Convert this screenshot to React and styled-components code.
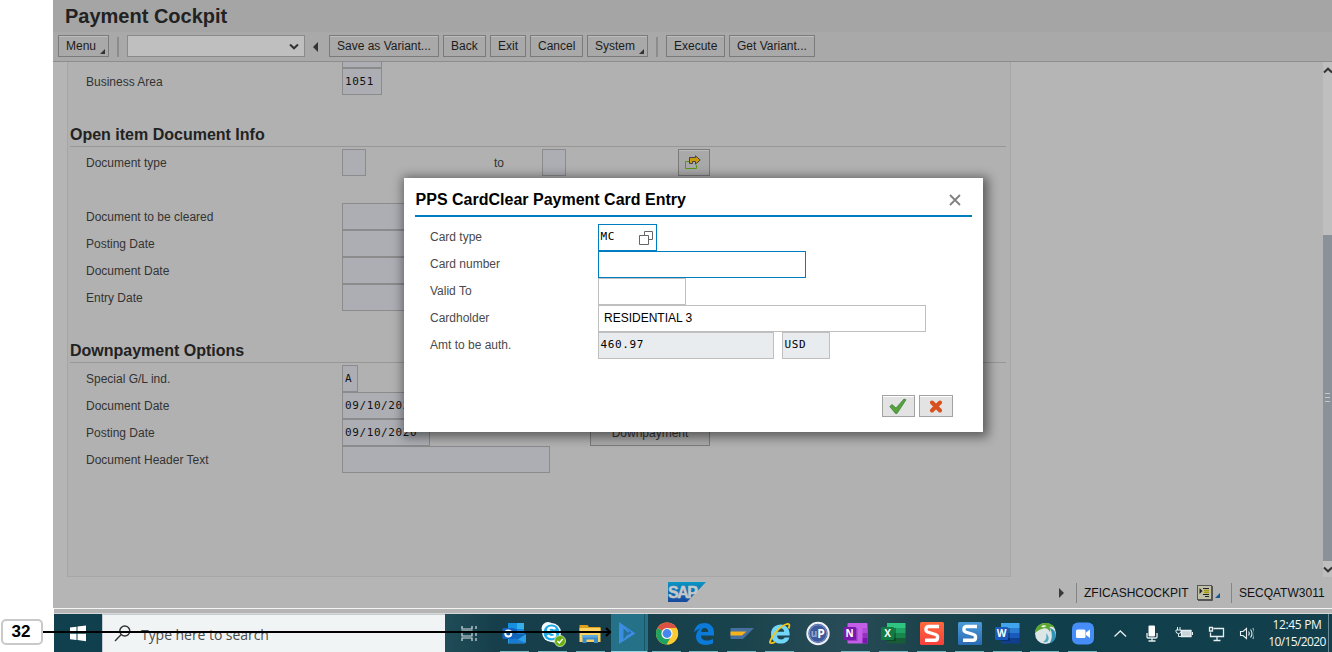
import React from 'react';
import styled, { createGlobalStyle } from 'styled-components';

const sans = '"Liberation Sans", Arial, sans-serif';
const mono = '"DejaVu Sans Mono", "Lucida Console", monospace';
const segoe = '"Open Sans", "Segoe UI", sans-serif';

const GlobalStyle = createGlobalStyle`
  * { box-sizing: border-box; }
  body { margin: 0; background: #fff; font-family: ${sans}; font-size: 12px; }
  svg { display: block; flex: none; }
`;

const Screen = styled.div`
  position: relative;
  width: 1332px;
  height: 652px;
  padding-left: 53px;
  overflow: hidden;
  display: flex;
  flex-direction: column;
`;
const Window = styled.div`
  height: 608px;
  display: flex;
  flex-direction: column;
  background: #b5b5b5;
`;
const TitleBar = styled.h1`
  margin: 0;
  height: 32px;
  padding-left: 12px;
  background: #a5a5a5;
  color: #222;
  font-size: 20px;
  line-height: 32px;
  font-weight: bold;
`;
const Toolbar = styled.div`
  height: 30px;
  display: flex;
  align-items: flex-start;
  gap: 4px;
  padding: 3px 0 0 5px;
  background: #a9a9a9;
  border-bottom: 1px solid #8d8d8d;
`;
const ToolButton = styled.div`
  position: relative;
  width: ${(p) => p.$w}px;
  height: 22px;
  padding-left: 7px;
  border: 1px solid #7b7b7b;
  box-shadow: inset 0 1px 0 #bdbdbd;
  background: #a9a9a9;
  color: #1c1c1c;
  line-height: 20px;
  white-space: nowrap;
`;
const Corner = styled.span`
  position: absolute;
  right: 3px;
  bottom: 2px;
  border-left: 5px solid transparent;
  border-bottom: 5px solid #333;
`;
const Separator = styled.div`
  width: 2px;
  height: 20px;
  margin: 2px 4px 0;
  background: #8c8c8c;
`;
const Combo = styled.div`
  width: 178px;
  height: 22px;
  display: flex;
  align-items: center;
  justify-content: flex-end;
  padding-right: 5px;
  border: 1px solid #8a8a8a;
  background: #bfbfbf;
`;
const CollapseArrow = styled.div`
  margin: 7px 7px 0 4px;
  border: 5px solid transparent;
  border-right-color: #333;
  border-left: 0;
`;
const Body = styled.div`
  height: 515px;
  display: flex;
  justify-content: space-between;
  padding-left: 14px;
`;
const Panel = styled.div`
  width: 944px;
  overflow: hidden;
  background: #b1b1b1;
  border: 1px solid #a6a6a6;
  border-top: 0;
  padding: 0 4px 0 2px;
`;
const Row = styled.div`
  height: ${(p) => p.$h || 27}px;
  padding-left: 16px;
  display: flex;
  align-items: flex-end;
`;
const Label = styled.div`
  width: ${(p) => p.$w || 256}px;
  height: 27px;
  flex: none;
  line-height: 29px;
  color: #333;
  white-space: nowrap;
`;
const Field = styled.div`
  width: ${(p) => p.$w}px;
  height: 27px;
  flex: none;
  padding-left: 2px;
  border: 1px solid #8b8b8b;
  background: #adaeb4;
  color: #111;
  font: 11px/25px ${mono};
  letter-spacing: 0.6px;
  white-space: nowrap;
`;
const SectionTitle = styled.h2`
  margin: 0 0 2px;
  height: 25px;
  border-bottom: 1px solid #979797;
  color: #222;
  font-size: 16px;
  line-height: 25px;
  font-weight: bold;
`;
const MoreButton = styled.div`
  width: 32px;
  height: 27px;
  margin-left: 112px;
  padding-right: 2px;
  display: flex;
  align-items: center;
  justify-content: center;
  border: 1px solid #7b7b7b;
  box-shadow: inset 0 1px 0 #bdbdbd;
  background: #a9a9a9;
`;
const DownButton = styled.div`
  width: 120px;
  height: 27px;
  margin-left: 160px;
  border: 1px solid #7b7b7b;
  background: #a9a9a9;
  color: #333;
  text-align: center;
  line-height: 27px;
`;
const Scrollbar = styled.div`
  width: 9px;
  display: flex;
  flex-direction: column;
  background: #bfbfbf;
  overflow: hidden;
`;
const ScrollCap = styled.div`
  height: 173px;
  padding-top: 5px;
`;
const Thumb = styled.div`
  height: 326px;
  display: flex;
  align-items: center;
  justify-content: center;
  background: #8a9199;
`;
const ScrollEnd = styled.div`
  padding-top: 5px;
`;
const StatusBar = styled.div`
  height: 31px;
  display: flex;
  align-items: center;
  color: #111;
  font-size: 12px;
`;
const LogoSlot = styled.div`
  margin: 0 0 1px 615px;
`;
const StatusText = styled.div`
  width: ${(p) => p.$w}px;
  white-space: nowrap;
`;
const StatusRule = styled.div`
  width: 1px;
  height: 20px;
  margin: 1px 7px 0 ${(p) => p.$l}px;
  background: #858585;
`;
const StatusArrow = styled.div`
  margin: 1px 0 0 353px;
  border: 5px solid transparent;
  border-left-color: #3a3a3a;
  border-right: 0;
`;
const StatusCorner = styled.div`
  margin: 5px 0 0 2px;
  border-left: 5px solid transparent;
  border-bottom: 5px solid #155a8c;
`;
const WindowEdge = styled.div`
  height: 6px;
  margin-left: 1px;
  background: #b5b5b5;
  border-top: 1px solid #f4f4f4;
  border-bottom: 1px solid #d8d8d8;
`;

const Dialog = styled.div`
  position: absolute;
  left: 404px;
  top: 178px;
  width: 579px;
  height: 254px;
  padding: 0 11px;
  background: #fff;
  box-shadow: 2px 2px 10px 3px rgba(0, 0, 0, 0.48);
`;
const DialogHead = styled.div`
  height: 39px;
  padding: 7px 11px 0 0.6px;
  display: flex;
  justify-content: space-between;
  align-items: center;
  border-bottom: 2px solid #007cc0;
  color: #000;
  font-size: 16px;
  font-weight: bold;
`;
const DialogForm = styled.div`
  padding: 7px 0 0 15px;
`;
const DialogRow = styled.div`
  display: flex;
  gap: 8px;
`;
const DialogLabel = styled.div`
  width: 160px;
  line-height: 26px;
  color: #4a4a4a;
`;
const DialogField = styled.div`
  width: ${(p) => p.$w}px;
  height: 27px;
  padding: 0 3px 0 ${(p) => (p.$plain ? 5 : 1.6)}px;
  display: flex;
  align-items: center;
  justify-content: space-between;
  border: 1px solid ${(p) => (p.$active ? '#007cc0' : '#bfbfbf')};
  background: ${(p) => (p.$disabled ? '#e8ecef' : '#fff')};
  color: #000;
  font: ${(p) => (p.$plain ? `12px/24px ${sans}` : `11px/24px ${mono}`)};
  letter-spacing: ${(p) => (p.$plain ? 0 : 0.6)}px;
`;
const FieldText = styled.span`
  height: 25px;
`;
const DialogActions = styled.div`
  display: flex;
  justify-content: flex-end;
  gap: 4px;
  padding: 36px 19px 0 0;
`;
const ActionButton = styled.div`
  width: ${(p) => p.$w}px;
  height: 22px;
  padding-right: 1px;
  display: flex;
  align-items: center;
  justify-content: center;
  border: 1px solid #a3a3a3;
  background: #e3e3e3;
  box-shadow: inset 0 1px 0 #fff;
`;

const Taskbar = styled.div`
  height: 38px;
  margin-left: 1px;
  display: flex;
  background: linear-gradient(90deg, #1f4c58 0, #1f4c58 392px, #163f4b 440px, #163f4b 600px, #19434c 680px, #284c57 790px, #1a424b 880px, #103f4b 1000px, #123f4b 100%);
`;
const Start = styled.div`
  width: 48px;
  background: #10404d;
`;
const Search = styled.div`
  width: 343px;
  padding-left: 11px;
  display: flex;
  align-items: center;
  gap: 10px;
  background: #f0f4f5;
  border: solid #c4cccf;
  border-width: 1px 0 0 1px;
  color: #4c4c4c;
  font: 14px/20px ${segoe};
`;
const SearchText = styled.span`
  padding-top: 2px;
  letter-spacing: -0.05px;
`;
const TaskView = styled.div`
  width: 51px;
  padding-left: 15px;
`;
const Apps = styled.div`
  width: 608px;
  display: flex;
`;
const AppSlot = styled.div`
  width: 37.9px;
  flex: none;
  display: flex;
  justify-content: center;
  background: ${(p) => (p.$active ? 'linear-gradient(90deg, transparent 1px, #257187 1px, #257187 34px, #1c5566 34px, #1c5566 35px, #257187 35px)' : 'none')};
`;
const Tray = styled.div`
  display: flex;
`;
const Clock = styled.div`
  width: 74px;
  padding: 2px 0 0 12px;
  color: #f3f7f8;
  font: 12px/17px ${segoe};
  text-align: center;
  white-space: nowrap;
`;
const ClockLine = styled.div`
  letter-spacing: ${(p) => p.$ls}px;
`;
const ShowDesktop = styled.div`
  width: 4px;
  border-left: 1px solid #6b8c94;
`;

const Callout = styled.div`
  position: absolute;
  left: 1px;
  top: 619px;
  display: flex;
  align-items: center;
`;
const CalloutTag = styled.div`
  width: 42px;
  height: 26px;
  padding-right: 2px;
  border: 2px solid #c9c9c9;
  border-radius: 5px;
  background: #fff;
  color: #000;
  font-size: 17px;
  line-height: 22px;
  font-weight: bold;
  text-align: center;
`;

const Glyph = ({ children, line = true }) => (
  <svg width="36" height="38" viewBox="0 0 36 38">
    {children}
    {line && <rect x="3" y="37" width="29" height="1" fill="#74bcc2" />}
  </svg>
);
const Chevron = ({ up }) => (
  <svg width="10" height="7" viewBox="0 0 10 7">
    <path d={up ? 'M1 5.5 5 1.7 9 5.5' : 'M1 1.5 5 5.3 9 1.5'} fill="none" stroke="#333" strokeWidth="2" />
  </svg>
);
const tileText = { fontFamily: 'Open Sans, sans-serif', fontWeight: 700, fill: '#fff', textAnchor: 'middle' };

const OutlookIcon = () => (
  <Glyph>
    <path d="M11 10h16v8l2 3v6a2 2 0 0 1-2 2H11z" fill="#1067b8" />
    <path d="M11 9h9v6h-9z" fill="#1490df" /><path d="M20 9h7v6h-7z" fill="#35aeea" />
    <path d="M11 15h9v6h-9z" fill="#0f62b5" /><path d="M20 15h7v5h-7z" fill="#1a86da" />
    <path d="M11 22l9 4 9-6v7.500a2 2 0 0 1-2 2H11z" fill="#2b9fe8" /><path d="M12 22l17 7H12z" fill="#1a7ad2" />
    <rect x="5.500" y="14" width="12" height="11" rx="1" fill="#1462bd" />
    <circle cx="11.300" cy="19.500" r="3" fill="none" stroke="#fff" strokeWidth="1.900" />
  </Glyph>
);
const SkypeIcon = () => (
  <Glyph>
    <circle cx="13" cy="14.500" r="6.500" fill="#f4fbfe" /><circle cx="19" cy="22" r="6.500" fill="#f4fbfe" />
    <circle cx="16.500" cy="18.500" r="9.500" fill="#f4fbfe" /><circle cx="16.500" cy="18.500" r="8" fill="#1eaae8" />
    <path d="M20 15.200c-1-2.200-6.800-2-6.800.8 0 3 7 1.700 7 4.800 0 3-6.200 3-7.400.2" fill="none" stroke="#fff" strokeWidth="2.300" />
    <circle cx="25" cy="27" r="5.500" fill="#6bb012" stroke="#d9ecc4" strokeWidth=".8" />
    <path d="M22.400 27l1.900 2 3.400-4" fill="none" stroke="#fff" strokeWidth="1.400" />
  </Glyph>
);
const FolderIcon = () => (
  <Glyph>
    <path d="M6.500 11h8l1.500 2h11.500v5h-21z" fill="#dda01c" /><path d="M6.500 14h21v14h-21z" fill="#f9d262" />
    <path d="M9.500 21h15.500v8h-4v-3.500h-7.500V29h-4z" fill="#3a8ccc" /><path d="M9.500 21H25v2.500H9.500z" fill="#5aaae0" />
  </Glyph>
);
const DynamicsIcon = () => (
  <Glyph line={false}>
    <path d="M8 8 24.500 19.500 8 30z" fill="#3b8de0" />
    <path d="M12.500 14.500 17.500 19l-5 6.500z" fill="#25708f" />
    <path d="M13 11.500 18.500 17.500l-3 4 5-2.800z" fill="#2564ac" />
    <path d="M0 37h36v1H0z" fill="#8ed4df" />
  </Glyph>
);
const ChromeIcon = () => (
  <Glyph>
    <circle cx="18" cy="19.500" r="11" fill="#fbc930" />
    <path d="M18 19.500 8.500 14A11 11 0 0 1 27.600 14z" fill="#dd5144" />
    <path d="M18 19.500 8.500 14A11 11 0 0 0 17.500 30.500l5-8.500z" fill="#1da462" />
    <path d="M18 14h9.600A11 11 0 0 1 18 30.500l5-8.500z" fill="#fbc930" />
    <circle cx="18" cy="19.500" r="5.600" fill="#f4f6f6" /><circle cx="18" cy="19.500" r="4.400" fill="#4587ed" />
  </Glyph>
);
const EdgeIcon = () => (
  <Glyph>
    <path d="M8 18.500C9 12 13 9 18.500 9 25 9 28 13.500 28 18.500v3H15c0 3 2.500 5 6 5 2.500 0 4.500-.7 6-1.500v4.300c-2 1-4.500 1.700-7 1.700-6 0-10-3.500-10-8.500 0-4 2-6.500 5-8-3.500.8-5.500 2.500-7 4zM15.200 18h7c0-2.500-1.300-4-3.500-4-2 0-3.200 1.500-3.500 4z" fill="#0b7ad8" />
  </Glyph>
);
const SapLogonIcon = () => (
  <Glyph>
    <path d="M6.500 14H30L19 25H6.500z" fill="#456f9e" /><path d="M6.500 17.500h16L18 21.500H6.500z" fill="#f8b21a" />
  </Glyph>
);
const IeIcon = () => (
  <Glyph>
    <path d="M9 20c0-6 4.500-9.500 9.800-9.500 5.200 0 9.200 4 8.900 11H15c.3 3 2 4 4.200 4 1.800 0 2.900-.7 3.500-1.900h4.700c-1.200 4-4.400 6-8.500 6C13 29.600 9 26 9 20zm6.100-2.200h7.100c-.2-2.300-1.500-3.500-3.600-3.500-2 0-3.300 1.300-3.500 3.500z" fill="#72d6f8" />
    <path d="M26.500 14.500c2-4 .5-5.500-3-4C17 13 9 23 8 28c-.2 1.500 2 1.500 5 0" fill="none" stroke="#f5c519" strokeWidth="1.800" />
  </Glyph>
);
const UpIcon = () => (
  <Glyph line={false}>
    <circle cx="18" cy="19.500" r="10.700" fill="#3d5b9c" stroke="#eef0f6" strokeWidth="2" />
    <circle cx="18" cy="19.500" r="8.700" fill="none" stroke="#9aaace" strokeWidth=".7" />
    <text x="14" y="23" fontSize="10" {...tileText} fill="#98a7cc">u</text>
    <text x="21" y="24" fontSize="12" {...tileText}>P</text>
  </Glyph>
);
const OfficeIcon = ({ letter, tile, colors }) => (
  <Glyph>
    <rect x="11" y="9" width="18.500" height="5" fill={colors[0]} /><rect x="11" y="14" width="18.500" height="5" fill={colors[1]} />
    <rect x="11" y="19" width="18.500" height="5" fill={colors[2]} /><rect x="11" y="24" width="18.500" height="5.500" fill={colors[3]} />
    <path d="M11 14h9v13h-9z" fill="#000" opacity=".25" />
    <rect x="5" y="13" width="13" height="13" rx="1" fill={tile} />
    <text x="11.500" y="23.300" fontSize="10" {...tileText}>{letter}</text>
  </Glyph>
);
const OneNoteIcon = () => (
  <Glyph>
    <rect x="9.500" y="9" width="20" height="20.500" rx="1" fill="#c45de8" />
    <path d="M24.500 14h5v5h-5z" fill="#b04ed8" /><path d="M24.500 19h5v5h-5z" fill="#9332bf" /><path d="M24.500 24h5v5.500h-5z" fill="#7719aa" />
    <path d="M9.500 14h10v13h-10z" fill="#9a3cc4" />
    <rect x="5" y="13" width="13" height="13" rx="1" fill="#7719aa" />
    <text x="11.500" y="23.300" fontSize="10" {...tileText}>N</text>
  </Glyph>
);
const SnagIcon = ({ from, to, id }) => (
  <Glyph>
    <defs><linearGradient id={id} x2="0" y2="1"><stop stopColor={from} /><stop offset="1" stopColor={to} /></linearGradient></defs>
    <rect x="6" y="8" width="24" height="23" rx="1.500" fill={`url(#${id})`} />
    <path d="M25 12.500H14.500Q12 12.500 12 15v1.200Q12 17.500 13.500 18l8 2.500Q23.500 21.200 23.500 22.500v1.300Q23.500 26.300 21 26.300H11" fill="none" stroke="#fff" strokeWidth="3.400" />
  </Glyph>
);
const GlobeIcon = () => (
  <Glyph>
    <circle cx="18.500" cy="19.500" r="10.500" fill="#dde6e6" />
    <path d="M8 19c0-6 5-10 10.500-10 4 0 8 2 9.500 5-2-1.300-4-1.500-5.500-.8 1 1.500 1 3 .5 4.800-1.500-3.200-4-4.500-7-3.500-3 .8-5.500 2.500-8 4.500z" fill="#5da82f" />
    <path d="M14 12.500c1.500-1.500 4-1.500 5.500-.5-1.500 1-3.500 2-5.500.5z" fill="#eef5e8" />
    <path d="M23 14c4 1 6 4.500 5.800 8-.5 3.500-3 6.500-6.500 7.500 3-4 3.500-9 .7-15.500z" fill="#2f94b8" />
    <path d="M19 19c3 3 3.500 6 1.500 8.500-1.500 1-3 1-4.500.5 3-1.500 4-5 3-9z" fill="#57a9c4" />
  </Glyph>
);
const ZoomIcon = () => (
  <Glyph>
    <rect x="7" y="8.500" width="22" height="22" rx="6" fill="#468df8" />
    <rect x="11" y="15.500" width="9.500" height="8.500" rx="1.500" fill="#fff" /><path d="M21 18.500l4-3v8.500l-4-3z" fill="#fff" />
  </Glyph>
);

const APPS = [
  <OutlookIcon />, <SkypeIcon />, <FolderIcon />, <DynamicsIcon />, <ChromeIcon />, <EdgeIcon />, <SapLogonIcon />, <IeIcon />, <UpIcon />,
  <OneNoteIcon />,
  <OfficeIcon letter="X" tile="#107c41" colors={['#2fc481', '#21a366', '#17864c', '#185c37']} />,
  <SnagIcon id="snagRed" from="#ff6a3c" to="#f5403c" />,
  <SnagIcon id="snagBlue" from="#4b9bd8" to="#2a6bb4" />,
  <OfficeIcon letter="W" tile="#185abd" colors={['#41a5ee', '#2b7cd3', '#185abd', '#103f91']} />,
  <GlobeIcon />, <ZoomIcon />,
];

const TrayIcons = () => (
  <svg width="150" height="38" viewBox="1104 614 150 38" fill="none" stroke="#e6eef0" strokeWidth="1.300">
    <path d="M1114.500 636.500l5.800-5.500 5.800 5.500" />
    <rect x="1148.500" y="625.500" width="6.500" height="11" rx="1" fill="#fff" stroke="none" />
    <path d="M1147 633v4q0 1 1 1h8q1 0 1-1v-4M1152 638v3M1148.500 641h7" />
    <path d="M1181.500 630.500h9.500v6h-9.500z" fill="#c9d6d9" /><path d="M1192.500 632v3M1177.500 627v3M1180 627v3M1176 630h5v1.500q0 2-2.500 2t-2.500-2zM1178.500 634v2.500h3" strokeWidth="1" />
    <path d="M1213.500 628.500h10v8h-13v-4M1217 636.500v4M1213.500 640.500h7M1209.500 627.500h3v3.500h-3z" />
    <path d="M1240.500 631.500h2.500l3.500-3v10l-3.500-3h-2.500zM1248.500 631.500q1.500 2 0 4M1250.500 629.500q3 4 0 8" strokeWidth="1.100" /><path d="M1252.800 628q3.500 5.500 0 11" opacity=".6" />
  </svg>
);

const SapLogo = () => (
  <svg width="38" height="20" viewBox="0 0 38 20">
    <defs><linearGradient id="sap" x2="0" y2="1"><stop stopColor="#0a96c4" /><stop offset="1" stopColor="#17489c" /></linearGradient></defs>
    <path d="M0 0h38L19 20H0z" fill="url(#sap)" />
    <text x="0" y="15.500" fontSize="16" letterSpacing="-1.500" fontWeight="700" fontFamily="Liberation Sans, sans-serif" fill="#c4c8cb" stroke="#c4c8cb" strokeWidth=".5">SAP</text>
  </svg>
);

const FormRow = ({ label, w, value }) => (
  <Row><Label>{label}</Label><Field $w={w}>{value}</Field></Row>
);

export default function App() {
  return (
    <Screen>
      <GlobalStyle />
      <Window>
        <TitleBar>Payment Cockpit</TitleBar>
        <Toolbar>
          <ToolButton $w={51}>Menu<Corner /></ToolButton>
          <Separator />
          <Combo><Chevron /></Combo>
          <CollapseArrow />
          <ToolButton $w={110}>Save as Variant...</ToolButton>
          <ToolButton $w={43}>Back</ToolButton>
          <ToolButton $w={36}>Exit</ToolButton>
          <ToolButton $w={53}>Cancel</ToolButton>
          <ToolButton $w={61}>System<Corner /></ToolButton>
          <Separator />
          <ToolButton $w={59}>Execute</ToolButton>
          <ToolButton $w={86}>Get Variant...</ToolButton>
        </Toolbar>
        <Body>
          <Panel>
            <Row $h={6}><Label /><Field $w={40} /></Row>
            <FormRow label="Business Area" w={40} value="1051" />
            <Row />
            <SectionTitle>Open item Document Info</SectionTitle>
            <Row>
              <Label>Document type</Label>
              <Field $w={24} />
              <Label $w={128} />
              <Label $w={48}>to</Label>
              <Field $w={24} />
              <MoreButton>
                <svg width="16" height="15" viewBox="0 0 16 15">
                  <path d="M4 6.500H.5v7h11V10" fill="none" stroke="#5b9414" />
                  <path d="M4.500 8.500v-6h6V.8l4.700 4.200-4.700 4.200V6.500H7.500v2z" fill="#c99a0c" stroke="#444" />
                </svg>
              </MoreButton>
            </Row>
            <Row />
            <FormRow label="Document to be cleared" w={88} />
            <FormRow label="Posting Date" w={88} />
            <FormRow label="Document Date" w={88} />
            <FormRow label="Entry Date" w={88} />
            <Row />
            <SectionTitle>Downpayment Options</SectionTitle>
            <FormRow label="Special G/L ind." w={16} value="A" />
            <FormRow label="Document Date" w={88} value="09/10/2020" />
            <Row><Label>Posting Date</Label><Field $w={88}>09/10/2020</Field><DownButton>Downpayment</DownButton></Row>
            <FormRow label="Document Header Text" w={208} />
          </Panel>
          <Scrollbar>
            <ScrollCap><Chevron up /></ScrollCap>
            <Thumb>
              <svg width="5" height="10" viewBox="0 0 5 10"><path d="M0 .5h5M0 4.500h5M0 8.500h5" stroke="#c5c9cd" /></svg>
            </Thumb>
            <ScrollEnd><Chevron /></ScrollEnd>
          </Scrollbar>
        </Body>
        <StatusBar>
          <LogoSlot><SapLogo /></LogoSlot>
          <StatusArrow />
          <StatusRule $l={12} />
          <StatusText $w={113}>ZFICASHCOCKPIT</StatusText>
          <svg width="16" height="16" viewBox="0 0 16 16">
            <rect x=".5" y=".5" width="14" height="14" fill="#c0c0a8" stroke="#555" />
            <path d="M15.500 1v14.500H1" fill="none" stroke="#555" />
            <path d="M2.500 3v6l3-3z" fill="#222" /><path d="M6 3.500h6M6 9.500h6M8 11.500h4" stroke="#222" /><path d="M7 5.500h5M7 7.500h5" stroke="#a99a10" strokeWidth="1.500" />
          </svg>
          <StatusCorner />
          <StatusRule $l={11} />
          <StatusText $w={90}>SECQATW3011</StatusText>
        </StatusBar>
      </Window>
      <WindowEdge />
      <Taskbar>
        <Start>
          <svg width="48" height="38" viewBox="0 0 48 38">
            <path d="M16 13.500l6.500-.8v6H16zM23.500 12.500 32 11.500v7.200h-8.500zM16 19.700h6.500v6.300L16 25.200zM23.500 19.700H32V27.200l-8.500-1.100z" fill="#fff" />
          </svg>
        </Start>
        <Search>
          <svg width="17" height="17" viewBox="0 0 17 17" fill="none" stroke="#333" strokeWidth="1.400">
            <circle cx="10.800" cy="6" r="5" /><path d="M7.200 9.600 1 16" />
          </svg>
          <SearchText>Type here to search</SearchText>
        </Search>
        <TaskView>
          <svg width="20" height="38" viewBox="0 0 20 38" fill="none" stroke="#d5dfe2" strokeWidth="1.200">
            <path d="M2 12v3h10v-3M2 27v-3h10v3M2 17h10v5H2zM16 12v3M16 17v5M16 24v3" />
          </svg>
        </TaskView>
        <Apps>
          {APPS.map((icon, i) => <AppSlot key={i} $active={i === 3}>{icon}</AppSlot>)}
        </Apps>
        <Tray>
          <TrayIcons />
          <Clock>
            <ClockLine $ls={-0.35}>12:45 PM</ClockLine>
            <ClockLine $ls={-0.6}>10/15/2020</ClockLine>
          </Clock>
          <ShowDesktop />
        </Tray>
      </Taskbar>
      <Dialog>
        <DialogHead>
          PPS CardClear Payment Card Entry
          <svg width="12" height="12" viewBox="0 0 12 12"><path d="M1 1l10 10M11 1l-10 10" stroke="#808080" strokeWidth="1.800" /></svg>
        </DialogHead>
        <DialogForm>
          <DialogRow>
            <DialogLabel>Card type</DialogLabel>
            <DialogField $w={59} $active>
              <FieldText>MC</FieldText>
              <svg width="14" height="14" viewBox="0 0 14 14" fill="none" stroke="#666"><path d="M.5 4.500h9v9h-9zM5.500 4V.5h8v8H10" /></svg>
            </DialogField>
          </DialogRow>
          <DialogRow><DialogLabel>Card number</DialogLabel><DialogField $w={208} $active /></DialogRow>
          <DialogRow><DialogLabel>Valid To</DialogLabel><DialogField $w={88} /></DialogRow>
          <DialogRow>
            <DialogLabel>Cardholder</DialogLabel>
            <DialogField $w={328} $plain><FieldText>RESIDENTIAL 3</FieldText></DialogField>
          </DialogRow>
          <DialogRow>
            <DialogLabel>Amt to be auth.</DialogLabel>
            <DialogField $w={176} $disabled><FieldText>460.97</FieldText></DialogField>
            <DialogField $w={48} $disabled><FieldText>USD</FieldText></DialogField>
          </DialogRow>
        </DialogForm>
        <DialogActions>
          <ActionButton $w={33}>
            <svg width="18" height="16" viewBox="0 0 18 16"><path d="M.8 8.500 3 6.500l4 3.500L15 1l2 .8L8 15.500H6.500z" fill="#57a238" stroke="#3c8548" strokeWidth=".8" /></svg>
          </ActionButton>
          <ActionButton $w={34}>
            <svg width="14" height="13" viewBox="0 0 14 13"><path d="M3 2.500l8 8M11 2.500l-8 8" stroke="#d8501e" strokeWidth="4" strokeLinecap="round" /></svg>
          </ActionButton>
        </DialogActions>
      </Dialog>
      <Callout>
        <CalloutTag>32</CalloutTag>
        <svg width="570" height="12" viewBox="0 0 570 12">
          <path d="M0 6h566" stroke="#000" strokeWidth="2" /><path d="M563 2l4 4-4 4" fill="none" stroke="#000" strokeWidth="2" />
        </svg>
      </Callout>
    </Screen>
  );
}
